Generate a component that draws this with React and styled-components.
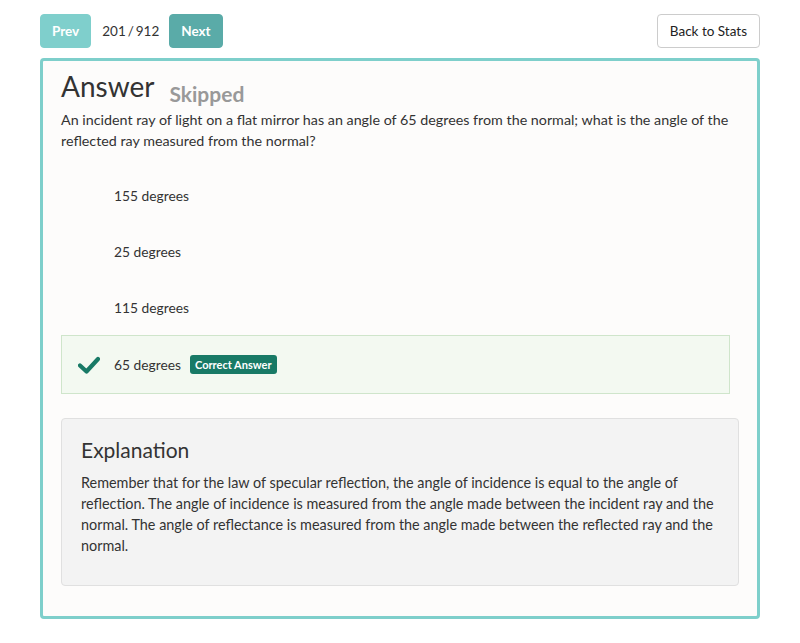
import React from 'react';
import styled, { createGlobalStyle } from 'styled-components';

const GlobalStyle = createGlobalStyle`
  body {
    margin: 0;
    background: #ffffff;
    font-family: Lato, "Open Sans", sans-serif;
    color: #333;
  }
`;

const Page = styled.div`
  width: 720px;
  padding: 14px 40px 0;
`;

const Toolbar = styled.div`
  display: flex;
  align-items: center;
  height: 34px;
`;

const NavButton = styled.button`
  height: 34px;
  padding: 0 11px;
  border: 1px solid ${p => (p.$dim ? '#7fcfcc' : '#5aaba8')};
  border-radius: 4px;
  background: ${p => (p.$dim ? '#7fcfcc' : '#5aaba8')};
  color: #fff;
  font-family: inherit;
  font-weight: 700;
  font-size: 13.5px;
  cursor: pointer;
`;

const Counter = styled.span`
  margin: 0 10px 0 11px;
  font-size: 13.5px;
  word-spacing: -1.5px;
  color: #333;
`;

const Spacer = styled.div`
  flex: 1;
`;

const BackButton = styled.button`
  height: 34px;
  padding: 0 12px;
  border: 1px solid #ccc;
  border-radius: 4px;
  background: #fff;
  color: #222;
  font-family: inherit;
  font-size: 13.5px;
`;

const Card = styled.div`
  margin-top: 10px;
  border: 3px solid #7ecfcb;
  border-radius: 4px;
  background: #fdfcfb;
  padding: 5px 18px 30px;
`;

const TitleRow = styled.div`
  display: flex;
  align-items: baseline;
  gap: 15px;
`;

const Title = styled.h2`
  margin: 0;
  font-size: 28px;
  font-weight: 400;
  color: #333;
  line-height: 40px;
`;

const Status = styled.span`
  font-size: 21px;
  font-weight: 700;
  color: #999;
  position: relative;
  top: 5px;
`;

const Question = styled.p`
  margin: 3px 0 16px;
  font-size: 14.3px;
  line-height: 21px;
  color: #333;
`;

const Options = styled.div`
  margin-right: 9px;
`;

const Option = styled.div`
  display: flex;
  align-items: center;
  height: ${p => (p.$correct ? '59px' : '56px')};
  box-sizing: border-box;
  padding-left: 16px;
  font-size: 13.8px;
  color: #333;
  border: 1px solid ${p => (p.$correct ? '#cfe5cb' : 'transparent')};
  background: ${p => (p.$correct ? '#f3f9f1' : 'transparent')};
`;

const Mark = styled.span`
  width: 36px;
  display: flex;
  align-items: center;
`;

const Badge = styled.span`
  margin-left: 9px;
  padding: 3px 5px;
  border-radius: 3px;
  background: #187a66;
  color: #fff;
  font-size: 11px;
  font-weight: 700;
`;

const Explanation = styled.div`
  margin-top: 24px;
  border: 1px solid #e0e0e0;
  border-radius: 4px;
  background: #f3f3f3;
  padding: 18px 19px 29px;
`;

const ExplTitle = styled.h3`
  margin: 0 0 10px;
  font-size: 21px;
  font-weight: 400;
  color: #333;
`;

const ExplText = styled.p`
  margin: 0;
  font-size: 14.4px;
  line-height: 21px;
  color: #333;
`;

const Check = () => (
  <svg width="22" height="18" viewBox="0 0 22 18">
    <path d="M2 9.5 L8.5 15.5 L20 3" fill="none" stroke="#187a66" strokeWidth="4.2" strokeLinecap="round" strokeLinejoin="round" />
  </svg>
);

const options = [
  { text: '155 degrees' },
  { text: '25 degrees' },
  { text: '115 degrees' },
  { text: '65 degrees', correct: true },
];

export default function App() {
  return (
    <>
      <GlobalStyle />
      <Page>
        <Toolbar>
          <NavButton $dim>Prev</NavButton>
          <Counter>201 / 912</Counter>
          <NavButton>Next</NavButton>
          <Spacer />
          <BackButton>Back to Stats</BackButton>
        </Toolbar>
        <Card>
          <TitleRow>
            <Title>Answer</Title>
            <Status>Skipped</Status>
          </TitleRow>
          <Question>
            An incident ray of light on a flat mirror has an angle of 65 degrees from the normal; what is the angle of the reflected ray measured from the normal?
          </Question>
          <Options>
            {options.map(o => (
              <Option key={o.text} $correct={o.correct}>
                <Mark>{o.correct && <Check />}</Mark>
                {o.text}
                {o.correct && <Badge>Correct Answer</Badge>}
              </Option>
            ))}
          </Options>
          <Explanation>
            <ExplTitle>Explanation</ExplTitle>
            <ExplText>
              Remember that for the law of specular reflection, the angle of incidence is equal to the angle of reflection. The angle of incidence is measured from the angle made between the incident ray and the normal. The angle of reflectance is measured from the angle made between the reflected ray and the normal.
            </ExplText>
          </Explanation>
        </Card>
      </Page>
    </>
  );
}
